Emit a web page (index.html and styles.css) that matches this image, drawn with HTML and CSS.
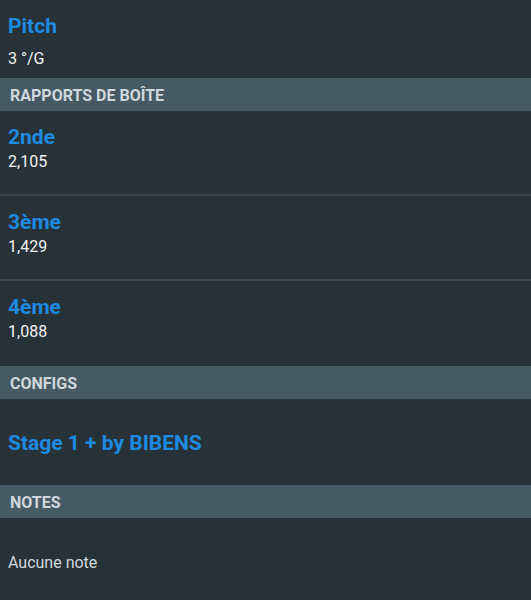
FILE: index.html
```html
<!DOCTYPE html>
<html lang="fr">
<head>
    <meta charset="UTF-8">
    <meta name="viewport" content="width=device-width, initial-scale=1.0">
    <title>Fiche</title>
    <link rel="stylesheet" href="styles.css">
</head>
<body>
    <div id="app">
        <div class="top">
            <div class="titre">Pitch</div>
            <div class="valeur top-valeur">3 °/G</div>
        </div>

        <div class="section">RAPPORTS DE BOÎTE</div>
        <div class="ligne">
            <div class="titre">2nde</div>
            <div class="valeur">2,105</div>
        </div>
        <div class="ligne">
            <div class="titre">3ème</div>
            <div class="valeur">1,429</div>
        </div>
        <div class="ligne derniere">
            <div class="titre">4ème</div>
            <div class="valeur">1,088</div>
        </div>

        <div class="section">CONFIGS</div>
        <div class="config">
            <div class="titre">Stage 1 + by BIBENS</div>
        </div>

        <div class="section">NOTES</div>
        <div class="notes">Aucune note</div>
    </div>
</body>
</html>
```

FILE: styles.css
```css
body {
    margin: 0;
    background: #263238;
    font-family: Roboto, "Noto Sans", sans-serif;
    overflow: hidden;
}

#app {
    display: flex;
    flex-direction: column;
}

.titre {
    color: #1e8ae0;
    font-size: 21px;
    font-weight: bold;
    line-height: 24px;
}

.valeur {
    color: #f1f3f4;
    font-size: 16px;
    line-height: 20px;
    margin-top: 3px;
}

/* premier bloc, un peu plus aere */
.top {
    height: 78px;
    box-sizing: border-box;
    padding: 14px 8px 0;
}
.top .valeur {
    margin-top: 11px;
}

.section {
    height: 33px;
    line-height: 33px;
    padding: 1px 10px 0;
    box-sizing: border-box;
    background: #465a64;
    color: #cfd8dc;
    font-size: 16px;
    font-weight: bold;
}

.ligne {
    height: 85px;
    box-sizing: border-box;
    padding: 14px 8px 0;
    border-bottom: 2px solid #37464e;
}
.ligne.derniere {
    border-bottom: none;
}

.config {
    height: 86px;
    box-sizing: border-box;
    padding: 32px 8px 0;
}

.notes {
    padding: 35px 8px 0;
    color: #cfd8dc;
    font-size: 16px;
    line-height: 20px;
}
```
